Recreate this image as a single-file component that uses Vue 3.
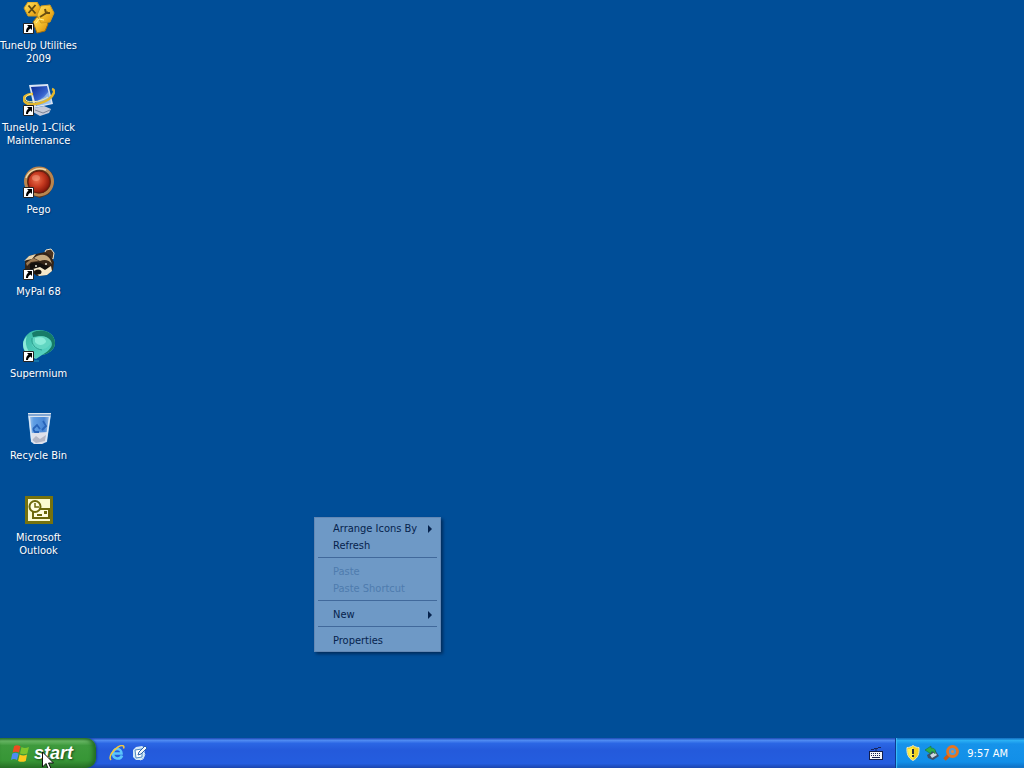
<script setup>
const shortcuts = [
  { id: 'utilities', label: 'TuneUp Utilities 2009', link: true },
  { id: 'oneclick', label: 'TuneUp 1-Click Maintenance', link: true },
  { id: 'pego', label: 'Pego', link: true },
  { id: 'mypal', label: 'MyPal 68', link: true },
  { id: 'supermium', label: 'Supermium', link: true },
  { id: 'bin', label: 'Recycle Bin', link: false },
  { id: 'outlook', label: 'Microsoft Outlook', link: false },
]
const menuGroups = [
  [{ label: 'Arrange Icons By', sub: true }, { label: 'Refresh' }],
  [{ label: 'Paste', off: true }, { label: 'Paste Shortcut', off: true }],
  [{ label: 'New', sub: true }],
  [{ label: 'Properties' }],
]
</script>

<template>
  <div class="screen">
    <svg class="paints" aria-hidden="true">
      <defs>
        <linearGradient id="gold" x1="0" y1="0" x2="1" y2="1">
          <stop offset="0" stop-color="#ffe267" /><stop offset=".5" stop-color="#f3bd2c" /><stop offset="1" stop-color="#d98a08" />
        </linearGradient>
        <linearGradient id="monitor" x1="0" y1="0" x2="1" y2="1">
          <stop offset="0" stop-color="#0b2a96" /><stop offset=".5" stop-color="#3461cc" /><stop offset="1" stop-color="#b7dafa" />
        </linearGradient>
        <radialGradient id="ruby" cx=".4" cy=".4" r=".65">
          <stop offset="0" stop-color="#ea7250" /><stop offset=".5" stop-color="#c63a20" /><stop offset="1" stop-color="#7c1006" />
        </radialGradient>
        <linearGradient id="teal" x1="0" y1="0" x2="1" y2="1">
          <stop offset="0" stop-color="#35b5a2" /><stop offset="1" stop-color="#62dccb" />
        </linearGradient>
        <linearGradient id="cup" x1="0" y1="0" x2="1" y2="0">
          <stop offset="0" stop-color="#b4d0ee" /><stop offset=".25" stop-color="#5f9ee4" /><stop offset=".7" stop-color="#4786d6" /><stop offset="1" stop-color="#a9c8e8" />
        </linearGradient>
      </defs>
    </svg>
    <main class="desktop">
      <ul class="icons">
        <li v-for="s in shortcuts" :key="s.id">
          <button type="button" class="shortcut">
            <svg class="pic" viewBox="0 0 32 32" aria-hidden="true">
              <g v-if="s.id === 'utilities'">
                <path d="M10 20l4-5 8 1 3 6-3 7-8 2z" fill="url(#gold)" stroke="#a8700a" />
                <path d="M1 6l4-6h9l4 7-4 7H5z" fill="url(#gold)" stroke="#d09a1c" />
                <path d="M14 13l4-9 9-1 4 8-4 9-9 1z" fill="url(#gold)" stroke="#d09a1c" />
                <path d="M5.500 3.500l7 8M12.500 3l-7 8" stroke="#5d4812" stroke-width="1.800" />
                <path d="M17 15l8-5M22 7l1 4 4 0" stroke="#6a4e10" stroke-width="2" fill="none" />
                <path d="M13 21l3-4 5 1" stroke="#fff08f" fill="none" />
              </g>

              <g v-else-if="s.id === 'oneclick'">
                <path d="M11 24l10-2 7 3-2 4-9 3-7-4z" fill="#c6cad8" />
                <path d="M12 26l8 3 7-3" stroke="#7c8397" fill="none" />
                <path d="M6 1l19-1 5 20-19 4z" fill="#d9e4f4" />
                <path d="M8 3l16-1 4 17-15 3z" fill="url(#monitor)" />
                <path d="M13 18l8-5 5-6 2 12-14 3z" fill="#a5cdf8" opacity=".65" />
                <path d="M10 10C2 10-1 14 2 18c4 4 17 2 24-3 5-4 7-9 3-10" fill="none" stroke="#e2b72e" stroke-width="2.600" />
                <path d="M9 10C2 11 1 15 4 17c6 2 15 0 21-4" fill="none" stroke="#fff0a0" stroke-width="1" />
              </g>

              <g v-else-if="s.id === 'pego'">
                <path d="M10 2l11-1 8 6 2 11-5 10-9 4-9-3-6-8 0-11z" fill="#5b351d" />
                <circle cx="16" cy="15.500" r="13.500" fill="none" stroke="#b9854f" stroke-width="3" />
                <path d="M3 12C6 4 15 1 23 4" fill="none" stroke="#f0d8a8" stroke-width="1.500" />
                <circle cx="16" cy="16" r="11" fill="url(#ruby)" stroke="#6b1b0c" />
                <ellipse cx="13" cy="12" rx="4" ry="3" fill="#ffb596" opacity=".4" />
              </g>

              <g v-else-if="s.id === 'mypal'">
                <path d="M21 6l2-4 5-1 3 4-1 6z" fill="#493320" stroke="#f3e6cc" />
                <path d="M2 13l4-5 7-2 9-2 6 4 3 6-1 8-6 5-10 1-7-5-5 1z" fill="#342518" />
                <path d="M1 13l5-5 7-2-4 5-5 1z" fill="#e7d3ad" />
                <path d="M3 15l7-5 6 3-8 1-4 4z" fill="#9b7b56" />
                <path d="M11 10c6-5 13-4 16 1l2 5c-3-4-7-5-12-3z" fill="#c8ad82" />
                <path d="M7 16c5-3 10-2 14 1l5 1-3 5-9 1-7-3z" fill="#120f0d" />
                <path d="M10 21l7-2 5 3 6-4 1 5-5 4-8 1z" fill="#f5e8ca" />
                <ellipse cx="15" cy="24" rx="3.500" ry="2.500" fill="#17120e" />
                <circle cx="13" cy="18" r="1" fill="#e8e4d6" /><circle cx="23" cy="16" r="1" fill="#e8e4d6" />
              </g>

              <g v-else-if="s.id === 'supermium'">
                <path d="M0 15C0 6 7 0 16 0s16 5 16 13c0 7-7 11-13 12l-6 4C5 26 0 22 0 15z" fill="url(#teal)" />
                <path d="M9 3C20-3 32 3 32 13c0 7-7 11-13 12 7-4 12-9 9-14-5-6-12-5-18-4z" fill="#167c68" />
                <path d="M10 8c7-3 16-2 18 4-2 8-14 10-19 3z" fill="#62d6c2" />
                <path d="M12 8c6-2 11 0 11 4-3 4-8 4-11 0z" fill="#8becd9" />
                <path d="M4 6C1 13 4 22 12 28 4 26 0 20 0 14c0-3 2-6 4-8z" fill="#8ceada" />
                <path d="M9 8c-1 6 3 11 10 12" stroke="#2b9f90" fill="none" />
                <path d="M11 31h5" stroke="#2695b8" />
              </g>

              <g v-else-if="s.id === 'bin'">
                <path d="M5 2h23l-4 28-5 2h-8l-3-2z" fill="url(#cup)" />
                <path d="M8 21l17-1-2 10-4 2h-8l-2-2z" fill="#dfe1ea" />
                <path d="M9 28l4-4 4 3 6-4-1 6-9 2z" fill="#b4b7c6" />
                <path d="M6 2l3 28M27 2l-4 28" stroke="#dce9f6" stroke-width="1.500" />
                <path d="M5 1h23v3H5z" fill="#7fa6d4" />
                <path d="M5 1.500h23M6 4.500h21" stroke="#dce5ed" />
                <path d="M10 17l4-4 3 4M20 9l3 5-4 4M16 20h-4l-2-3" stroke="#2864ba" stroke-width="1.800" fill="none" />
              </g>

              <g v-else>
                <path d="M2 2h28v28H2z" fill="#76720e" />
                <path d="M5 5h22v22H5z" fill="#fbfad0" />
                <rect x="10" y="15" width="16" height="9" fill="#fffde0" stroke="#6c680c" stroke-width="2" />
                <circle cx="12" cy="12.500" r="5.500" fill="#fffde0" stroke="#6c680c" stroke-width="2" />
                <path d="M12 9v4h4" stroke="#6c680c" stroke-width="1.500" fill="none" />
                <path d="M21 17h3v3h-3zM14 20h5v2h-5z" fill="#6c680c" />
              </g>

              <g v-if="s.link">
                <path d="M.5 21.500h10v10H.5z" fill="#fff" stroke="#222" />
                <path d="M4 23h5v5L7.500 26.500C6 27.500 5 28.500 5 30H3c0-2 .5-4 2.500-5.500z" fill="#000" />
              </g>
            </svg>
            <span class="caption">{{ s.label }}</span>
          </button>
        </li>
      </ul>

      <div class="menu" role="menu">
        <div v-for="(group, g) in menuGroups" :key="g" class="group" role="group">
          <button v-for="item in group" :key="item.label" type="button" role="menuitem" class="item" :disabled="item.off">
            <span>{{ item.label }}</span>
            <svg v-if="item.sub" class="arrow" viewBox="0 0 4 8" aria-hidden="true"><path d="M0 0l4 4-4 4z" fill="#06234d" /></svg>
          </button>
        </div>
      </div>
    </main>

    <footer class="taskbar">
      <button type="button" class="start">
        <svg class="flag" viewBox="0 0 18 18" aria-hidden="true">
          <path d="M3 2c2-1.500 4-1 6 .2L7.500 8C5.500 7 3.500 7 1.500 8z" fill="#ee4c20" />
          <path d="M10 2.800c2 1.200 4 1.200 7 0L15.500 9c-2.500 1-4.500 1-7 0z" fill="#7ec52e" />
          <path d="M1.200 9.200c2-1.200 4-1.200 6 0l-1.500 6c-2-1.200-4-1.200-5.700 0z" fill="#4b8cf2" />
          <path d="M8.200 10c2.400 1.200 4.800 1.200 7 0L14 16c-2.600 1.200-5 1-7.300 0z" fill="#fcc81c" />
        </svg>
        <span>start</span>
      </button>
      <nav class="quick" aria-label="Quick Launch">
        <button type="button" aria-label="Internet Explorer">
          <svg viewBox="0 0 16 16">
            <path d="M13 10.500C11.500 15 4 14.500 4 8.500 4 2.500 12.500 2.500 12.500 8.500H5" fill="none" stroke="#5cc5fb" stroke-width="2.600" />
            <path d="M2 15C-1 12 4 5 9 2c4-2.500 7-1.500 5.500 1.500" fill="none" stroke="#f2c840" stroke-width="1.500" />
          </svg>
        </button>
        <button type="button" aria-label="Show Desktop">
          <svg viewBox="0 0 16 16">
            <path d="M1 5l3-3 6-1 3 2-1 9-3 3H4l-3-3z" fill="#d4e9f7" />
            <path d="M3 5l7-1v8l-6 1z" fill="#fff" stroke="#4d8bc4" />
            <path d="M6 10l1-3 6-6 2 2-6 6z" fill="#f4f8fb" stroke="#2a63a8" />
            <path d="M12 8l1 1-2 5-3 1" stroke="#cfe6f5" fill="none" />
          </svg>
        </button>
      </nav>
      <button type="button" class="keyboard" aria-label="Keyboard">
        <svg viewBox="0 0 14 13">
          <path d="M2 2.500h3M5 1.500h4M9 .5h3M7 2v2" fill="none" stroke="#17265c" />
          <path d="M0 4h14v9H0z" fill="#101d4c" /><path d="M1 5h12v7H1z" fill="#f2f3f8" />
          <path d="M2 6.500h10M2 8.500h10" stroke="#15204c" stroke-dasharray="1 1" /><path d="M3 10.500h8" stroke="#15204c" />
        </svg>
      </button>
      <section class="tray" aria-label="Notification area">
        <button type="button" aria-label="Security alert">
          <svg viewBox="0 0 16 16">
            <path d="M8 .5C6 2 4 2.500 2 2.500c-.5 6 1 10.500 6 13 5-2.500 6.500-7 6-13-2 0-4-.5-6-2z" fill="#f2d322" stroke="#e9e8c4" />
            <path d="M8 2v12C4 12 3 9 3 4c2 0 3.500-.5 5-2z" fill="#fff04c" />
            <path d="M7 4h2v5H7zM7 10h2v2H7z" fill="#28303c" />
          </svg>
        </button>
        <button type="button" aria-label="Safely Remove Hardware">
          <svg viewBox="0 0 16 16">
            <path d="M3 10l8-5 4 6-6 4-5-2z" fill="#3d5068" /><path d="M6 10l5-3 2 3-5 3z" fill="#cfdae2" />
            <path d="M1 5l6-4v2c4 0 5 2 4 6-1-2-2-3-4-2v2z" fill="#2fae48" stroke="#176a35" stroke-width=".5" />
          </svg>
        </button>
        <button type="button" aria-label="Search">
          <svg viewBox="0 0 16 16">
            <path d="M1.500 14.500l5-5" stroke="#c95a14" stroke-width="3.500" />
            <circle cx="9.500" cy="6.500" r="5" fill="#4c9bdc" stroke="#e67520" stroke-width="2.800" />
            <circle cx="9.500" cy="6.500" r="1.500" fill="#e8893a" />
          </svg>
        </button>
        <time>9:57 AM</time>
      </section>
    </footer>

    <svg class="cursor" viewBox="0 0 12 19" aria-hidden="true">
      <path d="M.5 1v15l3.500-3.500L6.500 18.500l2.500-1L6.500 12h5z" fill="#fff" stroke="#111" />
    </svg>
  </div>
</template>

<style>
body { margin: 0; background: #004e98; }
</style>

<style scoped>
.screen {
  position: relative;
  display: flex;
  flex-direction: column;
  min-height: 100vh;
  overflow: hidden;
  background: #004e98;
  color: #fff;
  font: 11px/13px "DejaVu Sans Condensed", "Noto Sans", sans-serif;
}
button { margin: 0; padding: 0; border: 0; background: none; color: inherit; font: inherit; }
svg { display: block; }
.paints { position: absolute; width: 0; height: 0; }
.desktop { flex: 1; }
.icons { display: flex; flex-direction: column; width: 77px; margin: 0; padding: 2px 0 0; list-style: none; }
.icons li { height: 82px; }
.shortcut { display: flex; flex-direction: column; align-items: center; gap: 5px; width: 100%; }
.pic { width: 32px; height: 32px; }
.caption { text-align: center; text-shadow: 1px 1px 1px #00356f; }
.menu {
  position: absolute;
  left: 314px;
  top: 517px;
  padding: 2px;
  border: 1px solid #6388b5;
  background: #6e99c6;
  box-shadow: 2px 2px 3px #002c5c;
  color: #06234d;
}
.group + .group::before { content: ""; display: block; margin: 3px 1px 5px; border-top: 1px solid #41699b; }
.item { display: flex; align-items: center; justify-content: space-between; gap: 11px; width: 100%; height: 17px; padding: 0 6px 0 16px; white-space: nowrap; }
.item:disabled { color: #4f7cae; }
.arrow { width: 4px; height: 8px; }
.taskbar {
  display: flex;
  height: 30px;
  background: linear-gradient(#1c49b4, #4f8bf2 8%, #2b66e4 18%, #245adb 40%, #245ddf 85%, #1b45ae);
}
.start {
  display: flex;
  align-items: center;
  gap: 4px;
  width: 96px;
  padding-left: 11px;
  border-radius: 0 10px 10px 0;
  background: linear-gradient(#2f7a30, #6ab866 10%, #3e9a3d 25%, #379636 75%, #2a7328);
  box-shadow: inset -3px 0 4px #226b22, 1px 0 2px #173f9c;
  font: italic bold 18px/24px "Liberation Sans", Arial, sans-serif;
  text-shadow: 1px 1px 2px #1c4a1a;
}
.flag { width: 19px; height: 19px; }
.quick { display: flex; flex: 1; align-items: center; gap: 7px; padding-left: 13px; }
.quick svg { width: 16px; height: 16px; }
.keyboard { padding: 0 12px 0 0; }
.keyboard svg { width: 14px; height: 13px; }
.tray {
  display: flex;
  align-items: center;
  gap: 3px;
  padding: 0 16px 0 9px;
  border-left: 1px solid #0d3a91;
  background: linear-gradient(#0d62b8, #2bb0f4 8%, #1693ea 20%, #128fe8 80%, #0f6cc0);
  box-shadow: inset 1px 0 1px #3cc0f8;
}
.tray svg { width: 16px; height: 16px; }
.tray time { margin-left: 5px; white-space: nowrap; }
.cursor { position: absolute; left: 42px; bottom: -2px; width: 12px; height: 19px; }
</style>
